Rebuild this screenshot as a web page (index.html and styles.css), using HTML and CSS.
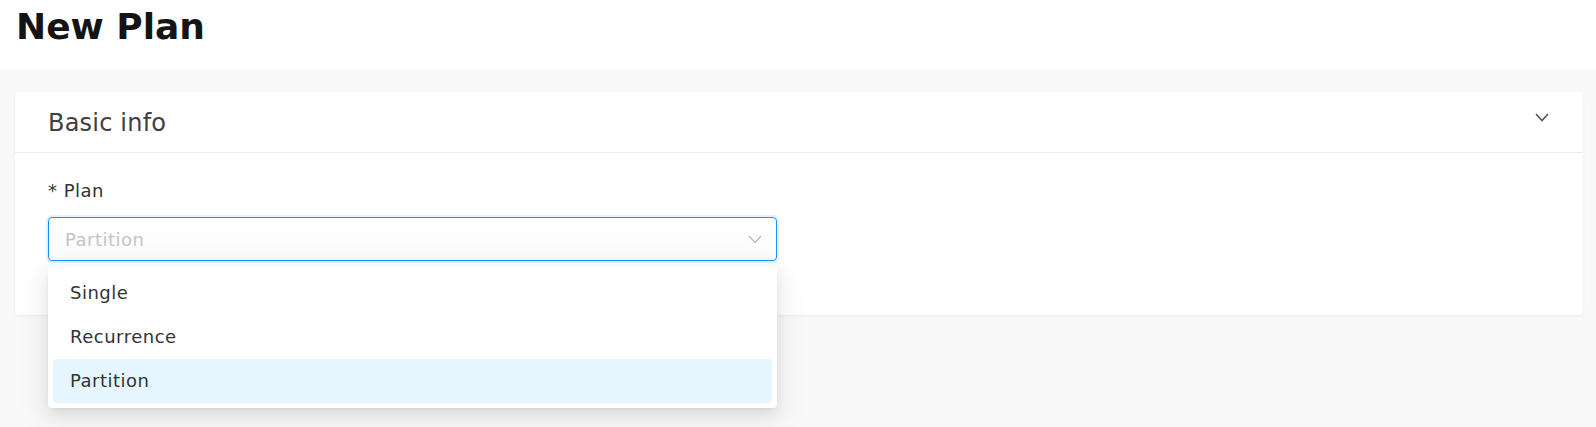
FILE: index.html
```html
<!DOCTYPE html>
<html lang="en">
<head>
    <meta charset="UTF-8">
    <meta name="viewport" content="width=device-width, initial-scale=1.0">
    <title>New Plan</title>
    <link rel="stylesheet" href="styles.css">
</head>
<body>
    <header class="page-header">
        <h1>New Plan</h1>
    </header>
    <main class="page-body">
        <section class="card">
            <div class="card-head">
                <h2>Basic info</h2>
                <svg class="chevron" width="14" height="9" viewBox="0 0 14 9">
                    <polyline points="1,1 7,7.5 13,1" fill="none" stroke="#555" stroke-width="1.6"/>
                </svg>
            </div>
            <div class="card-body">
                <label class="field-label">* Plan</label>
                <div class="select">
                    <div class="select-box">
                        <span class="placeholder">Partition</span>
                        <svg class="select-arrow" width="14" height="9" viewBox="0 0 14 9">
                            <polyline points="1,1 7,7.5 13,1" fill="none" stroke="#bfbfbf" stroke-width="1.4"/>
                        </svg>
                    </div>
                    <!-- open dropdown -->
                    <ul class="dropdown">
                        <li>Single</li>
                        <li>Recurrence</li>
                        <li class="active">Partition</li>
                    </ul>
                </div>
            </div>
        </section>
    </main>
</body>
</html>
```

FILE: styles.css
```css
* {
    box-sizing: border-box;
}

html, body {
    margin: 0;
    height: 100%;
}

body {
    font-family: "DejaVu Sans", Verdana, sans-serif;
    background: #f9f9f9;
    color: #333;
}

.page-header {
    background: #fff;
    height: 70px;
    padding: 0 16px;
}

.page-header h1 {
    margin: 0;
    font-size: 36px;
    line-height: 54px;
    font-weight: bold;
    color: #141414;
}

.page-body {
    padding: 22px 13px 0 15px;
}

.card {
    background: #fff;
    border-radius: 4px;
    box-shadow: 0 1px 3px rgba(0, 0, 0, 0.06);
}

.card-head {
    height: 61px;
    padding: 2px 34px 0 33px;
    display: flex;
    align-items: center;
    justify-content: space-between;
    border-bottom: 1px solid #ececec;
}

.card-head h2 {
    margin: 0;
    font-size: 24px;
    letter-spacing: 0.2px;
    font-weight: normal;
    color: #404040;
}

.chevron {
    margin-top: -11px;
}

.card-body {
    padding: 24px 33px 54px;
}

.field-label {
    display: block;
    font-size: 18px;
    letter-spacing: 0.5px;
    line-height: 28px;
    color: #333;
    margin-bottom: 12px;
}

.select {
    position: relative;
    width: 729px;
}

.select-box {
    height: 44px;
    border: 1px solid #1890ff;
    border-radius: 4px;
    box-shadow: 0 0 0 2px rgba(24, 144, 255, 0.12);
    background: linear-gradient(#fff, #fbfbfb);
    display: flex;
    align-items: center;
    justify-content: space-between;
    padding: 0 14px 0 16px;
}

.placeholder {
    font-size: 18px;
    letter-spacing: 0.5px;
    color: #c4c4c4;
}

.dropdown {
    position: absolute;
    top: calc(100% + 5px);
    left: 0;
    right: 0;
    margin: 0;
    padding: 5px;
    list-style: none;
    background: #fff;
    border-radius: 4px;
    box-shadow: 0 3px 6px -4px rgba(0, 0, 0, 0.12), 0 6px 16px 0 rgba(0, 0, 0, 0.08), 0 9px 28px 8px rgba(0, 0, 0, 0.05);
}

.dropdown li {
    height: 44px;
    line-height: 44px;
    padding: 0 17px;
    font-size: 18px;
    letter-spacing: 0.5px;
    color: #333;
    border-radius: 4px;
}

.dropdown li.active {
    background: #e6f6fe;
}
```
